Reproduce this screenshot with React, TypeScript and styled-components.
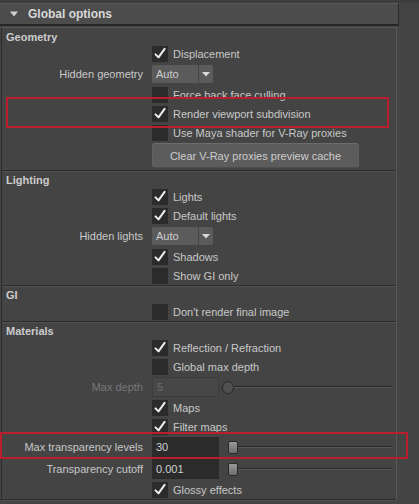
import { styled, createGlobalStyle } from "styled-components";

const GlobalStyle = createGlobalStyle`
  html, body {
    margin: 0;
    padding: 0;
    background: #444444;
    overflow: hidden;
  }
  body {
    font-family: "Liberation Sans", Arial, sans-serif;
    font-size: 11px;
    color: #c8c8c8;
  }
`;

type RowItem =
  | { kind: "check"; text: string; checked: boolean }
  | { kind: "select"; label: string; value: string }
  | { kind: "button"; text: string }
  | { kind: "slider"; label: string; value: string; disabled?: boolean };

interface SectionData {
  title: string;
  rows: RowItem[];
}

const sections: SectionData[] = [
  {
    title: "Geometry",
    rows: [
      { kind: "check", text: "Displacement", checked: true },
      { kind: "select", label: "Hidden geometry", value: "Auto" },
      { kind: "check", text: "Force back face culling", checked: false },
      { kind: "check", text: "Render viewport subdivision", checked: true },
      { kind: "check", text: "Use Maya shader for V-Ray proxies", checked: false },
      { kind: "button", text: "Clear V-Ray proxies preview cache" },
    ],
  },
  {
    title: "Lighting",
    rows: [
      { kind: "check", text: "Lights", checked: true },
      { kind: "check", text: "Default lights", checked: true },
      { kind: "select", label: "Hidden lights", value: "Auto" },
      { kind: "check", text: "Shadows", checked: true },
      { kind: "check", text: "Show GI only", checked: false },
    ],
  },
  {
    title: "GI",
    rows: [{ kind: "check", text: "Don't render final image", checked: false }],
  },
  {
    title: "Materials",
    rows: [
      { kind: "check", text: "Reflection / Refraction", checked: true },
      { kind: "check", text: "Global max depth", checked: false },
      { kind: "slider", label: "Max depth", value: "5", disabled: true },
      { kind: "check", text: "Maps", checked: true },
      { kind: "check", text: "Filter maps", checked: true },
      { kind: "slider", label: "Max transparency levels", value: "30" },
      { kind: "slider", label: "Transparency cutoff", value: "0.001" },
      { kind: "check", text: "Glossy effects", checked: true },
    ],
  },
];

function CheckMark() {
  return (
    <svg width="16" height="16" viewBox="0 0 16 16">
      <path
        d="M3.5 8.4 L6.5 11.4 L12.6 2.8"
        fill="none"
        stroke="#eeeeee"
        strokeWidth="2"
        strokeLinecap="round"
        strokeLinejoin="round"
      />
    </svg>
  );
}

function Row({ item }: { item: RowItem }) {
  if (item.kind === "check") {
    return (
      <CheckRow>
        <span />
        <Control>
          <Box>{item.checked && <CheckMark />}</Box>
          <span>{item.text}</span>
        </Control>
      </CheckRow>
    );
  }
  if (item.kind === "select") {
    return (
      <SelectRow>
        <Label>{item.label}</Label>
        <Control>
          <Dropdown>
            <DropValue>{item.value}</DropValue>
            <DropArrow>
              <svg width="8" height="5" viewBox="0 0 8 5">
                <path d="M0 0 L8 0 L4 4.5 Z" fill="#d8d8d8" />
              </svg>
            </DropArrow>
          </Dropdown>
        </Control>
      </SelectRow>
    );
  }
  if (item.kind === "button") {
    return (
      <ButtonRow>
        <span />
        <Control>
          <ActionButton>{item.text}</ActionButton>
        </Control>
      </ButtonRow>
    );
  }
  return (
    <SliderRow>
      <Label $disabled={item.disabled}>{item.label}</Label>
      <Control>
        <Field $disabled={item.disabled}>{item.value}</Field>
        <Slider $disabled={item.disabled}>
          <Thumb $disabled={item.disabled} />
          <Track />
        </Slider>
      </Control>
    </SliderRow>
  );
}

export default function App() {
  return (
    <Page>
      <GlobalStyle />
      <Header>
        <svg width="8" height="6" viewBox="0 0 8 6">
          <path d="M0 0.5 L8 0.5 L4 5.5 Z" fill="#d0d0d0" />
        </svg>
        <HeaderTitle>Global options</HeaderTitle>
      </Header>
      <Panel>
        {sections.map((s) => (
          <Section key={s.title}>
            <SectionTitle>{s.title}</SectionTitle>
            {s.rows.map((r, i) => (
              <Row key={i} item={r} />
            ))}
          </Section>
        ))}
      </Panel>
      <Highlight style={{ left: 6, top: 97, width: 383, height: 31 }} />
      <Highlight style={{ left: 0, top: 432, width: 408, height: 27 }} />
    </Page>
  );
}

const Page = styled.div`
  position: relative;
  width: 419px;
  height: 504px;
  padding-top: 3px;
  box-sizing: border-box;
  background: linear-gradient(#3d3d3d 0, #3d3d3d 3px, #444444 3px);
`;

const Header = styled.div`
  width: 388px;
  height: 20px;
  display: flex;
  align-items: center;
  padding-left: 10px;
  background: #4c4c4c;
  border-top: 1px solid #5a5a5a;
  border-bottom: 2px solid #262626;
  border-right: 1px solid #2a2a2a;
`;

const HeaderTitle = styled.span`
  margin-left: 10px;
  font-weight: bold;
  font-size: 12px;
  color: #d8d8d8;
`;

const Panel = styled.div`
  margin-top: 1px;
  margin-left: 1px;
  width: 394px;
  padding-top: 1px;
  border-top: 1px solid #565656;
  border-left: 1px solid #2c2c2c;
  border-right: 1px solid #595959;
`;

const Section = styled.div`
  padding-top: 2px;
  border-bottom: 1px solid #2c2c2c;
  box-shadow: 0 1px 0 #525252;
  margin-bottom: 1px;
`;

const SectionTitle = styled.div`
  height: 13px;
  line-height: 13px;
  padding-left: 4px;
  font-weight: bold;
  color: #cccccc;
`;

const BaseRow = styled.div`
  display: grid;
  grid-template-columns: 141px 1fr;
  column-gap: 9px;
  align-items: center;
`;

const CheckRow = styled(BaseRow)`
  height: 19px;
`;

const SelectRow = styled(BaseRow)`
  height: 22px;
`;

const ButtonRow = styled(BaseRow)`
  height: 28px;
  padding-bottom: 1px;
  box-sizing: border-box;
`;

const SliderRow = styled(BaseRow)`
  height: 22px;
`;

const Label = styled.span<{ $disabled?: boolean }>`
  text-align: right;
  white-space: nowrap;
  color: ${(p) => (p.$disabled ? "#777777" : "#c8c8c8")};
`;

const Control = styled.div`
  display: flex;
  align-items: center;
  gap: 5px;
  white-space: nowrap;
  padding-right: 4px;
`;

const Box = styled.div`
  width: 16px;
  height: 16px;
  flex: none;
  background: #2b2b2b;
  display: flex;
  align-items: center;
  justify-content: center;
`;

const Dropdown = styled.div`
  width: 61px;
  height: 18px;
  display: flex;
  background: #5b5b5b;
  border-radius: 2px;
`;

const DropValue = styled.span`
  flex: 1;
  padding-left: 4px;
  line-height: 18px;
  color: #cfcfcf;
`;

const DropArrow = styled.span`
  width: 14px;
  display: flex;
  align-items: center;
  justify-content: center;
  border-left: 1px solid #444444;
`;

const ActionButton = styled.div`
  width: 207px;
  height: 25px;
  line-height: 24px;
  text-align: center;
  background: #5c5c5c;
  border: 1px solid #626262;
  border-top-color: #6c6c6c;
  border-bottom-color: #4e4e4e;
  border-radius: 3px;
  box-sizing: border-box;
  color: #cccccc;
`;

const Field = styled.div<{ $disabled?: boolean }>`
  width: 67px;
  height: 20px;
  flex: none;
  box-sizing: border-box;
  padding-left: 4px;
  background: ${(p) => (p.$disabled ? "#474747" : "#2b2b2b")};
  border: ${(p) => (p.$disabled ? "1px solid #3c3c3c" : "none")};
  line-height: ${(p) => (p.$disabled ? "18px" : "20px")};
  color: ${(p) => (p.$disabled ? "#6c6c6c" : "#d0d0d0")};
`;

const Slider = styled.div<{ $disabled?: boolean }>`
  flex: 1;
  display: flex;
  align-items: center;
  margin-left: ${(p) => (p.$disabled ? "-2px" : "4px")};
`;

const Thumb = styled.div<{ $disabled?: boolean }>`
  width: ${(p) => (p.$disabled ? "10px" : "8px")};
  height: ${(p) => (p.$disabled ? "11px" : "11px")};
  flex: none;
  border: 1px solid #2a2a2a;
  border-radius: ${(p) => (p.$disabled ? "50%" : "2px")};
  background: ${(p) =>
    p.$disabled ? "#505050" : "linear-gradient(#9a9a9a, #6c6c6c)"};
`;

const Track = styled.div`
  flex: 1;
  height: 1px;
  background: #262626;
  border-bottom: 1px solid #5a5a5a;
`;

const Highlight = styled.div`
  position: absolute;
  border: 2px solid #b81e2d;
  box-sizing: border-box;
  pointer-events: none;
`;
